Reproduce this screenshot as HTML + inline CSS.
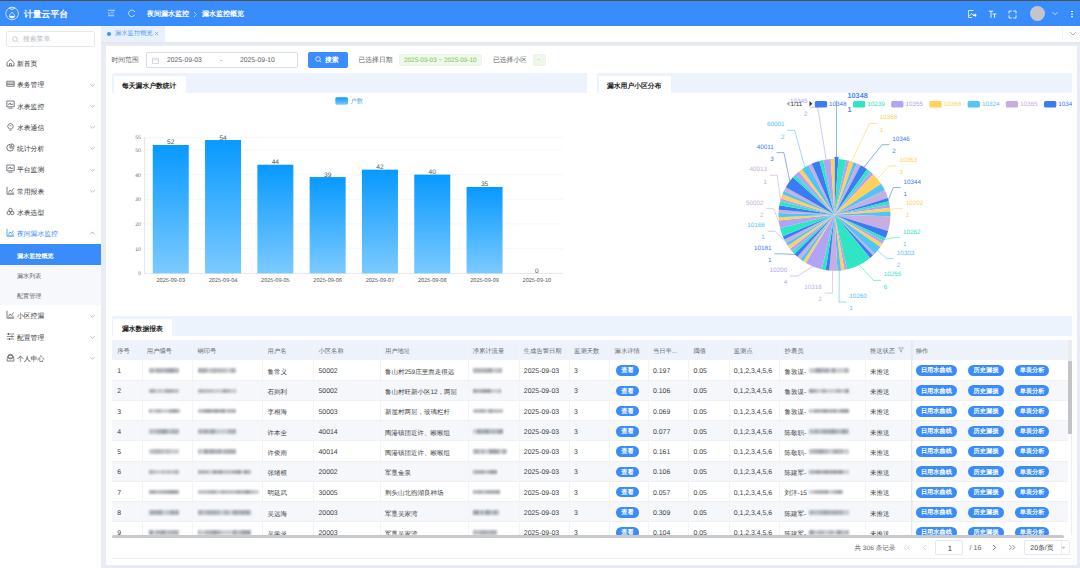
<!DOCTYPE html>
<html><head><meta charset="utf-8">
<style>
*{box-sizing:border-box;margin:0;padding:0}
html,body{width:1080px;height:568px;overflow:hidden;background:#e9edf3;font-family:"Liberation Sans",sans-serif;color:#303133;text-rendering:geometricPrecision}
.a{position:absolute}
.t{position:absolute;white-space:nowrap;line-height:1;transform:translateY(0.9px)}
#topline{left:0;top:0;width:1080px;height:1px;background:#4b5059}
#header{left:0;top:1px;width:1080px;height:25px;background:#388cfc}
#side{left:0;top:26px;width:101px;height:542px;background:#fff}
#tabbar{left:101px;top:26px;width:979px;height:15.6px;background:#fff}
#card{left:106px;top:46px;width:971px;height:519px;background:#fff}
.mi{position:absolute;left:17px;font-size:6.8px;color:#303133;line-height:1;white-space:nowrap;transform:translateY(0.9px)}
.chev{position:absolute;left:90px;width:4px;height:4px;border-right:0.8px solid #909399;border-bottom:0.8px solid #909399;transform:rotate(45deg)}
.hstrip{position:absolute;background:#edf3fd}
.htab{position:absolute;background:#fff}
.htxt{position:absolute;font-size:6.8px;font-weight:bold;color:#1a1a1a;white-space:nowrap;line-height:1;transform:translateY(0.9px)}
</style></head><body>
<div id="topline" class="a"></div>

<div id="header" class="a">
<svg class="a" style="left:4px;top:5px" width="17" height="17" viewBox="0 0 17 17"><circle cx="8.1" cy="7.5" r="6.3" fill="none" stroke="#e6efff" stroke-width="0.8"/><path d="M5 2.1 Q8.1 1.3 11.2 2.1 Q8.1 5 5 2.1Z" fill="none" stroke="#e6efff" stroke-width="0.8"/><path d="M8.1 6 C7.2 7.4 5.4 8.8 5.4 10.2 Q5.4 12 8.1 12 Q10.8 12 10.8 10.2 C10.8 8.8 9 7.4 8.1 6Z" fill="none" stroke="#e6efff" stroke-width="0.75"/><path d="M5.5 10 Q8.1 9.6 10.7 10.4 Q10.5 12 8.1 12 Q5.6 12 5.5 10Z" fill="#fff"/></svg>
<div class="t" style="left:24px;top:7.9px;font-size:8.8px;font-weight:bold;color:#fff">计量云平台</div>
<svg class="a" style="left:107px;top:7.2px" width="9" height="9" viewBox="0 0 9 9"><path d="M1 2.3H8" stroke="#fff" stroke-width="0.8" opacity="0.9"/><path d="M3.8 4.2H7.2" stroke="#fff" stroke-width="0.8" opacity="0.6"/><rect x="1" y="4.6" width="1.6" height="1.1" fill="#fff" opacity="0.7"/><path d="M3.8 5.6H7.2" stroke="#fff" stroke-width="0.6" opacity="0.35"/><rect x="1" y="6.7" width="6.3" height="1.6" fill="#fff" opacity="0.5"/></svg>
<svg class="a" style="left:127px;top:7.4px" width="9" height="9" viewBox="0 0 9 9"><path d="M7.5 3.6A3.2 3.2 0 1 0 7.7 6.7" fill="none" stroke="#fff" stroke-width="0.8" opacity="0.85"/><circle cx="7.5" cy="3.5" r="0.55" fill="#fff" opacity="0.8"/></svg>
<div class="t" style="left:147px;top:9px;font-size:7px;font-weight:bold;color:#fff">夜间漏水监控</div>
<svg class="a" style="left:193px;top:10px" width="5" height="7" viewBox="0 0 5 7"><path d="M1 1L3.5 3.5L1 6" fill="none" stroke="#dfe9fb" stroke-width="0.7"/></svg>
<div class="t" style="left:202px;top:9px;font-size:7px;font-weight:bold;color:#fff">漏水监控概览</div>
<svg class="a" style="left:967px;top:8px" width="10" height="10" viewBox="0 0 10 10"><path d="M6.5 1.5H1.5V8.5H5" fill="none" stroke="#fff" stroke-width="0.8"/><path d="M2.5 7L4.5 4.5L6 6" fill="none" stroke="#fff" stroke-width="0.7"/><path d="M6 5.5H8V4.2L9.6 6.2L8 8.2V6.9H6Z" fill="#fff"/></svg>
<svg class="a" style="left:988px;top:9px" width="9" height="9" viewBox="0 0 9 9"><path d="M0.8 1.2H5.2M3 1.2V7.8M4.6 4H8.4M6.5 4V7.8" fill="none" stroke="#fff" stroke-width="0.9"/></svg>
<svg class="a" style="left:1008px;top:9px" width="9" height="9" viewBox="0 0 9 9"><path d="M1 3.2V1H3.2M5.8 1H8V3.2M8 5.8V8H5.8M3.2 8H1V5.8" fill="none" stroke="#fff" stroke-width="0.9" stroke-linejoin="miter" stroke-linecap="square"/></svg>
<div class="a" style="left:1029.5px;top:4.5px;width:15px;height:15px;border-radius:50%;background:#c3c5cb"></div>
<svg class="a" style="left:1052px;top:10px" width="6" height="5" viewBox="0 0 6 5"><path d="M0.5 1.2L3 3.7L5.5 1.2" fill="none" stroke="#fff" stroke-width="0.7"/></svg>
<div class="a" style="left:1071px;top:9.5px;width:1.5px;height:1.5px;background:#fff;box-shadow:0 2.6px 0 #fff,0 5.2px 0 #fff"></div>
</div>

<div id="side" class="a">
<div class="a" style="left:6px;top:5px;width:89px;height:16px;border:1px solid #e4e7ed;border-radius:2px;background:#fff"></div>
<svg class="a" style="left:12px;top:10px" width="7" height="7" viewBox="0 0 7 7"><circle cx="3" cy="3" r="2.3" fill="none" stroke="#b4b7bd" stroke-width="0.7"/><path d="M4.7 4.7L6.3 6.3" stroke="#b4b7bd" stroke-width="0.7"/></svg>
<div class="t" style="left:23px;top:9.8px;font-size:6.8px;color:#b4b7bd">搜索菜单</div>
<svg class="a" style="left:5.5px;top:31.7px" width="9" height="9" viewBox="0 0 9 9"><path d="M1 4.5L4.5 1.3L8 4.5V8H1Z M3.5 8V5.6H5.5V8" fill="none" stroke="#5a5e66" stroke-width="0.8"/></svg>
<div class="mi" style="top:34.8px">新首页</div>
<svg class="a" style="left:5.5px;top:53.2px" width="9" height="9" viewBox="0 0 9 9"><path d="M0.8 2.2H8.2V7.3H0.8Z M0.8 4H8.2M0.8 5.6H8.2" fill="none" stroke="#5a5e66" stroke-width="0.75"/></svg>
<div class="mi" style="top:56.3px">表务管理</div>
<svg class="a" style="left:89px;top:56.5px" width="7" height="5" viewBox="0 0 7 5"><path d="M1.3 1.1L3.5 3.3L5.7 1.1" fill="none" stroke="#8f939a" stroke-width="0.6"/></svg>
<svg class="a" style="left:5.5px;top:74.4px" width="9" height="9" viewBox="0 0 9 9"><path d="M0.8 1H8.2V6.8H0.8Z M2.5 8.2H6.5 M1.8 4.2H3.4L4.2 3L5 5L5.8 4.2H7.2" fill="none" stroke="#5a5e66" stroke-width="0.8"/></svg>
<div class="mi" style="top:77.5px">水表监控</div>
<svg class="a" style="left:89px;top:77.7px" width="7" height="5" viewBox="0 0 7 5"><path d="M1.3 1.1L3.5 3.3L5.7 1.1" fill="none" stroke="#8f939a" stroke-width="0.6"/></svg>
<svg class="a" style="left:5.5px;top:95.6px" width="9" height="9" viewBox="0 0 9 9"><path d="M2.6 6.2A2.7 2.7 0 1 1 6.4 6.2L5.6 7H3.4Z" fill="none" stroke="#5a5e66" stroke-width="0.8"/><path d="M3.3 4.3A1.3 1.3 0 0 1 5.7 4.3" fill="none" stroke="#5a5e66" stroke-width="0.6"/><path d="M3.6 8.3H5.4" stroke="#5a5e66" stroke-width="0.8"/></svg>
<div class="mi" style="top:98.7px">水表通信</div>
<svg class="a" style="left:89px;top:98.9px" width="7" height="5" viewBox="0 0 7 5"><path d="M1.3 1.1L3.5 3.3L5.7 1.1" fill="none" stroke="#8f939a" stroke-width="0.6"/></svg>
<svg class="a" style="left:5.5px;top:117px" width="9" height="9" viewBox="0 0 9 9"><path d="M4 1.3A3.4 3.4 0 1 0 7.6 5H4Z M5.2 0.8V3.8H8.2A3 3 0 0 0 5.2 0.8Z" fill="none" stroke="#5a5e66" stroke-width="0.8"/></svg>
<div class="mi" style="top:120.1px">统计分析</div>
<svg class="a" style="left:89px;top:120.3px" width="7" height="5" viewBox="0 0 7 5"><path d="M1.3 1.1L3.5 3.3L5.7 1.1" fill="none" stroke="#8f939a" stroke-width="0.6"/></svg>
<svg class="a" style="left:5.5px;top:138.3px" width="9" height="9" viewBox="0 0 9 9"><path d="M0.8 1H8.2V6.8H0.8Z M2.5 8.2H6.5 M1.8 4.2H3.4L4.2 3L5 5L5.8 4.2H7.2" fill="none" stroke="#5a5e66" stroke-width="0.8"/></svg>
<div class="mi" style="top:141.4px">平台监测</div>
<svg class="a" style="left:89px;top:141.6px" width="7" height="5" viewBox="0 0 7 5"><path d="M1.3 1.1L3.5 3.3L5.7 1.1" fill="none" stroke="#8f939a" stroke-width="0.6"/></svg>
<svg class="a" style="left:5.5px;top:159.7px" width="9" height="9" viewBox="0 0 9 9"><path d="M1 0.8V8.2H8.2 M2.5 6.5L4 4L5.5 5.5L7.5 2.5 M3 8V6.8M5 8V6.5M7 8V5.5" fill="none" stroke="#5a5e66" stroke-width="0.8"/></svg>
<div class="mi" style="top:162.8px">常用报表</div>
<svg class="a" style="left:89px;top:163px" width="7" height="5" viewBox="0 0 7 5"><path d="M1.3 1.1L3.5 3.3L5.7 1.1" fill="none" stroke="#8f939a" stroke-width="0.6"/></svg>
<svg class="a" style="left:5.5px;top:180.9px" width="9" height="9" viewBox="0 0 9 9"><circle cx="4.5" cy="3" r="1.7" fill="none" stroke="#5a5e66" stroke-width="0.8"/><circle cx="2.7" cy="6" r="1.7" fill="none" stroke="#5a5e66" stroke-width="0.8"/><circle cx="6.3" cy="6" r="1.7" fill="none" stroke="#5a5e66" stroke-width="0.8"/></svg>
<div class="mi" style="top:184px">水表选型</div>
<svg class="a" style="left:5.5px;top:202px" width="9" height="9" viewBox="0 0 9 9"><path d="M1 0.8V8.2H8.2 M2.5 6.5L4 4L5.5 5.5L7.5 2.5 M3 8V6.8M5 8V6.5M7 8V5.5" fill="none" stroke="#3d8af7" stroke-width="0.8"/></svg>
<div class="mi" style="top:205.1px;color:#3d8af7">夜间漏水监控</div>
<svg class="a" style="left:89px;top:204.9px" width="7" height="5" viewBox="0 0 7 5"><path d="M1.3 3.3L3.5 1.1L5.7 3.3" fill="none" stroke="#3d8af7" stroke-width="0.6"/></svg>
<div class="a" style="left:0;top:218px;width:101px;height:61px;background:#f6f8fb"></div>
<div class="a" style="left:0;top:218px;width:101px;height:20.5px;background:#3a8cfb"></div>
<div class="mi" style="top:226.65px;color:#fff;font-size:6.1px;font-weight:bold">漏水监控概览</div>
<div class="mi" style="top:247.15px;color:#5a5e66;font-size:6.1px">漏水列表</div>
<div class="mi" style="top:267.45px;color:#5a5e66;font-size:6.1px">配置管理</div>
<svg class="a" style="left:5.5px;top:284.2px" width="9" height="9" viewBox="0 0 9 9"><path d="M1 0.8V8.2H8.2 M2.5 6.5L4 4L5.5 5.5L7.5 2.5 M3 8V6.8M5 8V6.5M7 8V5.5" fill="none" stroke="#5a5e66" stroke-width="0.8"/></svg>
<div class="mi" style="top:287.3px">小区控漏</div>
<svg class="a" style="left:89px;top:287.5px" width="7" height="5" viewBox="0 0 7 5"><path d="M1.3 1.1L3.5 3.3L5.7 1.1" fill="none" stroke="#8f939a" stroke-width="0.6"/></svg>
<svg class="a" style="left:5.5px;top:305.7px" width="9" height="9" viewBox="0 0 9 9"><path d="M0.8 2H8.2M0.8 4.5H8.2M0.8 7H8.2" stroke="#5a5e66" stroke-width="0.7"/><path d="M2.5 1V3M6 3.5V5.5M3.5 6V8" stroke="#5a5e66" stroke-width="1"/></svg>
<div class="mi" style="top:308.8px">配置管理</div>
<svg class="a" style="left:89px;top:309px" width="7" height="5" viewBox="0 0 7 5"><path d="M1.3 1.1L3.5 3.3L5.7 1.1" fill="none" stroke="#8f939a" stroke-width="0.6"/></svg>
<svg class="a" style="left:5.5px;top:326.7px" width="9" height="9" viewBox="0 0 9 9"><path d="M1.2 5.5A3.3 3.3 0 0 1 7.8 5.5V8H1.2Z M2.5 5H6.5" fill="none" stroke="#5a5e66" stroke-width="0.8"/><circle cx="4.5" cy="3.6" r="2.4" fill="none" stroke="#5a5e66" stroke-width="0.8"/></svg>
<div class="mi" style="top:329.8px">个人中心</div>
<svg class="a" style="left:89px;top:330px" width="7" height="5" viewBox="0 0 7 5"><path d="M1.3 1.1L3.5 3.3L5.7 1.1" fill="none" stroke="#8f939a" stroke-width="0.6"/></svg>
</div>

<div id="tabbar" class="a">
<div class="a" style="left:0;top:0;width:64px;height:15.6px;background:#e8f1fe"></div>
<div class="a" style="left:5.5px;top:5.5px;width:4px;height:4px;border-radius:50%;background:#3a8cfb"></div>
<div class="t" style="left:14px;top:4.2px;font-size:6.3px;color:#5b9af5">漏水监控概览</div>
<svg class="a" style="left:53px;top:5px" width="5" height="5" viewBox="0 0 5 5"><path d="M1 1L4 4M4 1L1 4" stroke="#5b9af5" stroke-width="0.6"/></svg>
<div class="a" style="left:961px;top:2px;width:1px;height:11px;background:#f0f2f5"></div>
<svg class="a" style="left:968px;top:5px" width="8" height="5" viewBox="0 0 8 5"><path d="M1 1L4 4L7 1" fill="none" stroke="#909399" stroke-width="0.7"/></svg>
</div>


<div class="a" style="left:101px;top:41.6px;width:979px;height:3px;background:linear-gradient(#e2e5ea,#e9edf3)"></div>
<div id="card" class="a">
<div class="t" style="left:5.5px;top:11.1px;font-size:6.8px;color:#606266">时间范围</div>
<div class="a" style="left:39.5px;top:5.5px;width:152.5px;height:16px;border:1px solid #dcdfe6;border-radius:2px;background:#fff"></div>
<svg class="a" style="left:45.5px;top:10.5px" width="7" height="7" viewBox="0 0 7 7"><path d="M0.5 1.2H6.5V6.5H0.5Z M0.5 2.8H6.5" fill="none" stroke="#c0c4cc" stroke-width="0.6"/></svg>
<div class="t" style="left:61px;top:11.1px;font-size:6.8px;color:#606266">2025-09-03</div>
<div class="t" style="left:114px;top:11.1px;font-size:6.8px;color:#606266">-</div>
<div class="t" style="left:134px;top:11.1px;font-size:6.8px;color:#606266">2025-09-10</div>
<div class="a" style="left:202px;top:5.5px;width:40px;height:16px;border-radius:2px;background:#3a8cfb"></div>
<svg class="a" style="left:209px;top:10px" width="7" height="7" viewBox="0 0 7 7"><circle cx="3" cy="3" r="2.3" fill="none" stroke="#fff" stroke-width="0.7"/><path d="M4.7 4.7L6.3 6.3" stroke="#fff" stroke-width="0.7"/></svg>
<div class="t" style="left:219px;top:11.1px;font-size:6.8px;color:#fff;font-weight:bold">搜索</div>
<div class="t" style="left:252.5px;top:11.1px;font-size:6.8px;color:#606266">已选择日期</div>
<div class="a" style="left:293px;top:7.5px;width:83px;height:12px;border:0.5px solid #ecf6e6;border-radius:2px;background:#eff8ea"></div>
<div class="t" style="left:298px;top:11.2px;font-size:6.4px;color:#7cc35a">2025-09-03 ~ 2025-09-10</div>
<div class="t" style="left:387px;top:11.1px;font-size:6.8px;color:#606266">已选择小区</div>
<div class="a" style="left:427px;top:7.5px;width:13px;height:12px;border:0.5px solid #ecf6e6;border-radius:2px;background:#eff8ea"></div>
<div class="t" style="left:431.5px;top:10.2px;font-size:6.4px;color:#7cc35a">-</div>
</div>

<div id="charts">
<div class="hstrip" style="left:111.5px;top:72.7px;width:475.5px;height:20px"></div>
<div class="htab" style="left:113.5px;top:75.8px;width:72px;height:17px"></div>
<div class="htxt" style="left:122px;top:82.5px">每天漏水户数统计</div>
<div class="hstrip" style="left:597px;top:72.7px;width:475px;height:20px"></div>
<div class="htab" style="left:599px;top:75.8px;width:72px;height:17px"></div>
<div class="htxt" style="left:607px;top:82.5px">漏水用户小区分布</div>
<div class="hstrip" style="left:111.5px;top:316px;width:960.5px;height:20px"></div>
<div class="htab" style="left:113px;top:319.4px;width:59px;height:17px"></div>
<div class="htxt" style="left:122px;top:325.7px">漏水数据报表</div>
<svg class="a" style="left:0;top:0" width="1080" height="568" viewBox="0 0 1080 568">
<defs><linearGradient id="bg" x1="0" y1="0" x2="0" y2="1"><stop offset="0" stop-color="#0799ff"/><stop offset="1" stop-color="#7ccaff"/></linearGradient></defs>
<line x1="144.6" y1="248.7" x2="563" y2="248.7" stroke="#eef0f4" stroke-width="0.6"/>
<line x1="144.6" y1="224" x2="563" y2="224" stroke="#eef0f4" stroke-width="0.6"/>
<line x1="144.6" y1="199.3" x2="563" y2="199.3" stroke="#eef0f4" stroke-width="0.6"/>
<line x1="144.6" y1="174.6" x2="563" y2="174.6" stroke="#eef0f4" stroke-width="0.6"/>
<line x1="144.6" y1="149.9" x2="563" y2="149.9" stroke="#eef0f4" stroke-width="0.6"/>
<line x1="144.6" y1="137.55" x2="563" y2="137.55" stroke="#eef0f4" stroke-width="0.6"/>
<line x1="144.6" y1="137.55" x2="144.6" y2="273.4" stroke="#e3e3e3" stroke-width="0.9"/>
<line x1="144.6" y1="273.4" x2="563" y2="273.4" stroke="#e3e3e3" stroke-width="0.9"/>
<text x="141" y="275.3" font-size="5.2" fill="#6e7079" text-anchor="end" font-family="Liberation Sans">0</text>
<text x="141" y="250.6" font-size="5.2" fill="#6e7079" text-anchor="end" font-family="Liberation Sans">10</text>
<text x="141" y="225.9" font-size="5.2" fill="#6e7079" text-anchor="end" font-family="Liberation Sans">20</text>
<text x="141" y="201.2" font-size="5.2" fill="#6e7079" text-anchor="end" font-family="Liberation Sans">30</text>
<text x="141" y="176.5" font-size="5.2" fill="#6e7079" text-anchor="end" font-family="Liberation Sans">40</text>
<text x="141" y="151.8" font-size="5.2" fill="#6e7079" text-anchor="end" font-family="Liberation Sans">50</text>
<text x="141" y="139.45" font-size="5.2" fill="#6e7079" text-anchor="end" font-family="Liberation Sans">55</text>
<rect x="152.75" y="144.96" width="36" height="128.44" fill="url(#bg)"/>
<text x="170.75" y="144.46" font-size="6.6" fill="#555" text-anchor="middle" font-family="Liberation Sans">52</text>
<text x="170.75" y="281.7" font-size="5.6" fill="#555" text-anchor="middle" font-family="Liberation Sans">2025-09-03</text>
<rect x="205.05" y="140.02" width="36" height="133.38" fill="url(#bg)"/>
<text x="223.05" y="139.52" font-size="6.6" fill="#555" text-anchor="middle" font-family="Liberation Sans">54</text>
<text x="223.05" y="281.7" font-size="5.6" fill="#555" text-anchor="middle" font-family="Liberation Sans">2025-09-04</text>
<rect x="257.35" y="164.72" width="36" height="108.68" fill="url(#bg)"/>
<text x="275.35" y="164.22" font-size="6.6" fill="#555" text-anchor="middle" font-family="Liberation Sans">44</text>
<text x="275.35" y="281.7" font-size="5.6" fill="#555" text-anchor="middle" font-family="Liberation Sans">2025-09-05</text>
<rect x="309.65" y="177.07" width="36" height="96.33" fill="url(#bg)"/>
<text x="327.65" y="176.57" font-size="6.6" fill="#555" text-anchor="middle" font-family="Liberation Sans">39</text>
<text x="327.65" y="281.7" font-size="5.6" fill="#555" text-anchor="middle" font-family="Liberation Sans">2025-09-06</text>
<rect x="361.95" y="169.66" width="36" height="103.74" fill="url(#bg)"/>
<text x="379.95" y="169.16" font-size="6.6" fill="#555" text-anchor="middle" font-family="Liberation Sans">42</text>
<text x="379.95" y="281.7" font-size="5.6" fill="#555" text-anchor="middle" font-family="Liberation Sans">2025-09-07</text>
<rect x="414.25" y="174.6" width="36" height="98.8" fill="url(#bg)"/>
<text x="432.25" y="174.1" font-size="6.6" fill="#555" text-anchor="middle" font-family="Liberation Sans">40</text>
<text x="432.25" y="281.7" font-size="5.6" fill="#555" text-anchor="middle" font-family="Liberation Sans">2025-09-08</text>
<rect x="466.55" y="186.95" width="36" height="86.45" fill="url(#bg)"/>
<text x="484.55" y="186.45" font-size="6.6" fill="#555" text-anchor="middle" font-family="Liberation Sans">35</text>
<text x="484.55" y="281.7" font-size="5.6" fill="#555" text-anchor="middle" font-family="Liberation Sans">2025-09-09</text>
<text x="536.85" y="272.9" font-size="6.6" fill="#555" text-anchor="middle" font-family="Liberation Sans">0</text>
<text x="536.85" y="281.7" font-size="5.6" fill="#555" text-anchor="middle" font-family="Liberation Sans">2025-09-10</text>
<rect x="335.3" y="97.2" width="12.7" height="7.5" rx="1.6" fill="url(#bg)"/>
<text x="350.5" y="102.6" font-size="6.2" fill="#4aa8f8" font-family="Liberation Sans">户数</text>
</svg>
<!--PIE--><svg class="a" style="left:0;top:0" width="1080" height="568" viewBox="0 0 1080 568" font-family="Liberation Sans"><defs><clipPath id="pieclip"><rect x="597" y="92.8" width="475" height="220"/></clipPath><clipPath id="legclip"><rect x="780" y="95" width="292" height="15"/></clipPath></defs><g clip-path="url(#pieclip)"><path d="M834.50 214.80L834.50 156.80A58 58 0 0 1 838.55 156.94Z" fill="#3b7cf5"/><path d="M834.50 214.80L838.41 158.94A56 56 0 0 1 846.05 160.00Z" fill="#2fe5c3"/><path d="M834.50 214.80L846.05 160.00A56 56 0 0 1 849.37 160.81Z" fill="#b1a3f5"/><path d="M834.50 214.80L849.37 160.81A56 56 0 0 1 853.65 162.18Z" fill="#fdd15b"/><path d="M834.50 214.80L853.65 162.18A56 56 0 0 1 857.01 163.52Z" fill="#56c3f6"/><path d="M834.50 214.80L857.01 163.52A56 56 0 0 1 860.70 165.31Z" fill="#c6aee1"/><path d="M834.50 214.80L860.70 165.31A56 56 0 0 1 867.02 169.21Z" fill="#3b7cf5"/><path d="M834.50 214.80L867.02 169.21A56 56 0 0 1 870.42 171.84Z" fill="#2fe5c3"/><path d="M834.50 214.80L870.42 171.84A56 56 0 0 1 873.26 174.38Z" fill="#b1a3f5"/><path d="M834.50 214.80L873.26 174.38A56 56 0 0 1 881.14 183.81Z" fill="#fdd15b"/><path d="M834.50 214.80L881.14 183.81A56 56 0 0 1 884.83 190.25Z" fill="#56c3f6"/><path d="M834.50 214.80L884.83 190.25A56 56 0 0 1 887.91 197.96Z" fill="#c6aee1"/><path d="M834.50 214.80L887.91 197.96A56 56 0 0 1 888.84 201.25Z" fill="#3b7cf5"/><path d="M834.50 214.80L888.84 201.25A56 56 0 0 1 889.54 204.50Z" fill="#2fe5c3"/><path d="M834.50 214.80L889.54 204.50A56 56 0 0 1 890.05 207.68Z" fill="#b1a3f5"/><path d="M834.50 214.80L890.05 207.68A56 56 0 0 1 890.40 211.38Z" fill="#fdd15b"/><path d="M834.50 214.80L890.40 211.38A56 56 0 0 1 890.48 216.27Z" fill="#56c3f6"/><path d="M834.50 214.80L890.48 216.27A56 56 0 0 1 888.14 230.89Z" fill="#c6aee1"/><path d="M834.50 214.80L888.14 230.89A56 56 0 0 1 885.50 237.93Z" fill="#3b7cf5"/><path d="M834.50 214.80L885.50 237.93A56 56 0 0 1 883.95 241.09Z" fill="#2fe5c3"/><path d="M834.50 214.80L883.95 241.09A56 56 0 0 1 882.40 243.81Z" fill="#b1a3f5"/><path d="M834.50 214.80L882.40 243.81A56 56 0 0 1 880.32 247.00Z" fill="#fdd15b"/><path d="M834.50 214.80L880.32 247.00A56 56 0 0 1 874.78 253.70Z" fill="#56c3f6"/><path d="M834.50 214.80L874.78 253.70A56 56 0 0 1 872.98 255.49Z" fill="#c6aee1"/><path d="M834.50 214.80L872.98 255.49A56 56 0 0 1 870.12 258.01Z" fill="#3b7cf5"/><path d="M834.50 214.80L870.12 258.01A56 56 0 0 1 847.19 269.34Z" fill="#2fe5c3"/><path d="M834.50 214.80L847.19 269.34A56 56 0 0 1 844.42 269.91Z" fill="#b1a3f5"/><path d="M834.50 214.80L844.42 269.91A56 56 0 0 1 841.13 270.41Z" fill="#fdd15b"/><path d="M834.50 214.80L841.13 270.41A56 56 0 0 1 837.43 270.72Z" fill="#56c3f6"/><path d="M834.50 214.80L837.43 270.72A56 56 0 0 1 829.23 270.55Z" fill="#c6aee1"/><path d="M834.50 214.80L829.23 270.55A56 56 0 0 1 825.55 270.08Z" fill="#3b7cf5"/><path d="M834.50 214.80L825.55 270.08A56 56 0 0 1 821.71 269.32Z" fill="#2fe5c3"/><path d="M834.50 214.80L821.71 269.32A56 56 0 0 1 805.83 262.90Z" fill="#b1a3f5"/><path d="M834.50 214.80L805.83 262.90A56 56 0 0 1 803.19 261.23Z" fill="#fdd15b"/><path d="M834.50 214.80L803.19 261.23A56 56 0 0 1 800.41 259.23Z" fill="#56c3f6"/><path d="M834.50 214.80L800.41 259.23A56 56 0 0 1 797.47 256.81Z" fill="#c6aee1"/><path d="M834.50 214.80L797.47 256.81A56 56 0 0 1 794.49 253.98Z" fill="#3b7cf5"/><path d="M834.50 214.80L794.49 253.98A56 56 0 0 1 792.24 251.54Z" fill="#2fe5c3"/><path d="M834.50 214.80L792.24 251.54A56 56 0 0 1 790.01 248.81Z" fill="#b1a3f5"/><path d="M834.50 214.80L790.01 248.81A56 56 0 0 1 787.75 245.63Z" fill="#fdd15b"/><path d="M834.50 214.80L787.75 245.63A56 56 0 0 1 786.10 242.97Z" fill="#56c3f6"/><path d="M834.50 214.80L786.10 242.97A56 56 0 0 1 784.30 239.61Z" fill="#c6aee1"/><path d="M834.50 214.80L784.30 239.61A56 56 0 0 1 782.80 236.32Z" fill="#3b7cf5"/><path d="M834.50 214.80L782.80 236.32A56 56 0 0 1 780.07 227.97Z" fill="#2fe5c3"/><path d="M834.50 214.80L780.07 227.97A56 56 0 0 1 778.79 220.46Z" fill="#b1a3f5"/><path d="M834.50 214.80L778.79 220.46A56 56 0 0 1 778.55 217.24Z" fill="#fdd15b"/><path d="M834.50 214.80L778.55 217.24A56 56 0 0 1 778.53 212.94Z" fill="#56c3f6"/><path d="M834.50 214.80L778.53 212.94A56 56 0 0 1 778.73 209.72Z" fill="#c6aee1"/><path d="M834.50 214.80L778.73 209.72A56 56 0 0 1 779.32 205.27Z" fill="#3b7cf5"/><path d="M834.50 214.80L779.32 205.27A56 56 0 0 1 780.16 201.25Z" fill="#2fe5c3"/><path d="M834.50 214.80L780.16 201.25A56 56 0 0 1 780.92 198.52Z" fill="#b1a3f5"/><path d="M834.50 214.80L780.92 198.52A56 56 0 0 1 782.36 194.37Z" fill="#fdd15b"/><path d="M834.50 214.80L782.36 194.37A56 56 0 0 1 783.96 190.69Z" fill="#56c3f6"/><path d="M834.50 214.80L783.96 190.69A56 56 0 0 1 785.76 187.22Z" fill="#c6aee1"/><path d="M834.50 214.80L785.76 187.22A56 56 0 0 1 792.88 177.33Z" fill="#3b7cf5"/><path d="M834.50 214.80L792.88 177.33A56 56 0 0 1 795.25 174.86Z" fill="#2fe5c3"/><path d="M834.50 214.80L795.25 174.86A56 56 0 0 1 798.96 171.53Z" fill="#b1a3f5"/><path d="M834.50 214.80L798.96 171.53A56 56 0 0 1 802.06 169.15Z" fill="#fdd15b"/><path d="M834.50 214.80L802.06 169.15A56 56 0 0 1 808.47 165.22Z" fill="#56c3f6"/><path d="M834.50 214.80L808.47 165.22A56 56 0 0 1 811.72 163.64Z" fill="#c6aee1"/><path d="M834.50 214.80L811.72 163.64A56 56 0 0 1 819.35 160.89Z" fill="#3b7cf5"/><path d="M834.50 214.80L819.35 160.89A56 56 0 0 1 823.14 159.96Z" fill="#2fe5c3"/><path d="M834.50 214.80L823.14 159.96A56 56 0 0 1 830.69 158.93Z" fill="#b1a3f5"/><path d="M834.50 214.80L830.69 158.93A56 56 0 0 1 834.50 158.80Z" fill="#fdd15b"/><polyline points="851.53,161.45 869.50,123.50 876.90,123.50" fill="none" stroke="#fdd15b" stroke-width="0.6"/><text x="879.70" y="119.40" font-size="6.3" fill="#fdd15b" text-anchor="start">10368</text><text x="879.70" y="131.70" font-size="6.3" fill="#fdd15b" text-anchor="start">1</text><polyline points="863.93,167.15 882.10,144.70 889.50,144.70" fill="none" stroke="#3b7cf5" stroke-width="0.6"/><text x="892.30" y="140.60" font-size="6.3" fill="#3b7cf5" text-anchor="start">10346</text><text x="892.30" y="152.90" font-size="6.3" fill="#3b7cf5" text-anchor="start">2</text><polyline points="877.46,178.88 889.20,166.00 896.60,166.00" fill="none" stroke="#fdd15b" stroke-width="0.6"/><text x="899.40" y="161.90" font-size="6.3" fill="#fdd15b" text-anchor="start">10363</text><text x="899.40" y="174.20" font-size="6.3" fill="#fdd15b" text-anchor="start">3</text><polyline points="888.40,199.60 893.30,187.60 900.70,187.60" fill="none" stroke="#3b7cf5" stroke-width="0.6"/><text x="903.50" y="183.50" font-size="6.3" fill="#3b7cf5" text-anchor="start">10344</text><text x="903.50" y="195.80" font-size="6.3" fill="#3b7cf5" text-anchor="start">1</text><polyline points="890.25,209.53 895.50,208.70 902.90,208.70" fill="none" stroke="#fdd15b" stroke-width="0.6"/><text x="905.70" y="204.60" font-size="6.3" fill="#fdd15b" text-anchor="start">10202</text><text x="905.70" y="216.90" font-size="6.3" fill="#fdd15b" text-anchor="start">1</text><polyline points="884.75,239.52 892.80,237.70 900.20,237.70" fill="none" stroke="#2fe5c3" stroke-width="0.6"/><text x="903.00" y="233.60" font-size="6.3" fill="#2fe5c3" text-anchor="start">10262</text><text x="903.00" y="245.90" font-size="6.3" fill="#2fe5c3" text-anchor="start">1</text><polyline points="877.68,250.46 886.50,258.60 893.90,258.60" fill="none" stroke="#56c3f6" stroke-width="0.6"/><text x="896.70" y="254.50" font-size="6.3" fill="#56c3f6" text-anchor="start">10303</text><text x="896.70" y="266.80" font-size="6.3" fill="#56c3f6" text-anchor="start">2</text><polyline points="859.31,265.00 873.50,280.40 880.90,280.40" fill="none" stroke="#2fe5c3" stroke-width="0.6"/><text x="883.70" y="276.30" font-size="6.3" fill="#2fe5c3" text-anchor="start">10255</text><text x="883.70" y="288.60" font-size="6.3" fill="#2fe5c3" text-anchor="start">6</text><polyline points="839.28,270.60 839.00,302.00 846.40,302.00" fill="none" stroke="#56c3f6" stroke-width="0.6"/><text x="849.20" y="297.90" font-size="6.3" fill="#56c3f6" text-anchor="start">10260</text><text x="849.20" y="310.20" font-size="6.3" fill="#56c3f6" text-anchor="start">1</text><polyline points="832.55,270.77 832.55,293.20 824.60,293.20" fill="none" stroke="#c6aee1" stroke-width="0.6"/><text x="821.80" y="289.10" font-size="6.3" fill="#c6aee1" text-anchor="end">10316</text><text x="821.80" y="301.40" font-size="6.3" fill="#c6aee1" text-anchor="end">2</text><polyline points="812.89,266.46 797.40,276.00 790.00,276.00" fill="none" stroke="#b1a3f5" stroke-width="0.6"/><text x="787.20" y="271.90" font-size="6.3" fill="#b1a3f5" text-anchor="end">10200</text><text x="787.20" y="284.20" font-size="6.3" fill="#b1a3f5" text-anchor="end">4</text><polyline points="795.04,254.54 781.70,253.80 774.30,253.80" fill="none" stroke="#3b7cf5" stroke-width="0.6"/><text x="771.50" y="249.70" font-size="6.3" fill="#3b7cf5" text-anchor="end">10181</text><text x="771.50" y="262.00" font-size="6.3" fill="#3b7cf5" text-anchor="end">1</text><polyline points="785.38,241.69 774.90,231.20 767.50,231.20" fill="none" stroke="#56c3f6" stroke-width="0.6"/><text x="764.70" y="227.10" font-size="6.3" fill="#56c3f6" text-anchor="end">10166</text><text x="764.70" y="239.40" font-size="6.3" fill="#56c3f6" text-anchor="end">1</text><polyline points="779.04,222.59 773.60,208.60 766.20,208.60" fill="none" stroke="#c6aee1" stroke-width="0.6"/><text x="763.40" y="204.50" font-size="6.3" fill="#c6aee1" text-anchor="end">50002</text><text x="763.40" y="216.80" font-size="6.3" fill="#c6aee1" text-anchor="end">2</text><polyline points="780.54,199.83 777.20,175.30 769.80,175.30" fill="none" stroke="#c6aee1" stroke-width="0.6"/><text x="767.00" y="171.20" font-size="6.3" fill="#c6aee1" text-anchor="end">40013</text><text x="767.00" y="183.50" font-size="6.3" fill="#c6aee1" text-anchor="end">1</text><polyline points="789.78,181.10 783.90,152.60 776.50,152.60" fill="none" stroke="#3b7cf5" stroke-width="0.6"/><text x="773.70" y="148.50" font-size="6.3" fill="#3b7cf5" text-anchor="end">40011</text><text x="773.70" y="160.80" font-size="6.3" fill="#3b7cf5" text-anchor="end">3</text><polyline points="804.82,167.31 794.70,130.30 787.30,130.30" fill="none" stroke="#56c3f6" stroke-width="0.6"/><text x="784.50" y="126.20" font-size="6.3" fill="#56c3f6" text-anchor="end">60001</text><text x="784.50" y="138.50" font-size="6.3" fill="#56c3f6" text-anchor="end">2</text><polyline points="826.13,159.43 817.70,107.30 810.30,107.30" fill="none" stroke="#b1a3f5" stroke-width="0.6"/><text x="807.50" y="103.20" font-size="6.3" fill="#b1a3f5" text-anchor="end">10345</text><text x="807.50" y="115.50" font-size="6.3" fill="#b1a3f5" text-anchor="end">2</text><polyline points="836.5,157 836.5,100.6" fill="none" stroke="#7aa6f7" stroke-width="0.8"/><text x="847.5" y="97.6" font-size="7.3" font-weight="bold" fill="#4a86f5">10348</text><text x="847.5" y="111.8" font-size="7.3" font-weight="bold" fill="#4a86f5">1</text></g><g clip-path="url(#legclip)"><path d="M786.7 103.7L789.5 101V106.4Z" fill="#aaa"/><text x="790.5" y="106" font-size="6.2" fill="#333">1/11</text><path d="M812.3 103.7L809.5 101V106.4Z" fill="#333"/><rect x="814.80" y="100.9" width="12.3" height="6.6" rx="1.5" fill="#3b7cf5"/><text x="829.10" y="105.9" font-size="6.3" fill="#3b7cf5">10348</text><rect x="853.00" y="100.9" width="12.3" height="6.6" rx="1.5" fill="#2fe5c3"/><text x="867.30" y="105.9" font-size="6.3" fill="#2fe5c3">10239</text><rect x="891.20" y="100.9" width="12.3" height="6.6" rx="1.5" fill="#b1a3f5"/><text x="905.50" y="105.9" font-size="6.3" fill="#b1a3f5">10355</text><rect x="929.40" y="100.9" width="12.3" height="6.6" rx="1.5" fill="#fdd15b"/><text x="943.70" y="105.9" font-size="6.3" fill="#fdd15b">10368</text><rect x="967.60" y="100.9" width="12.3" height="6.6" rx="1.5" fill="#56c3f6"/><text x="981.90" y="105.9" font-size="6.3" fill="#56c3f6">10324</text><rect x="1005.80" y="100.9" width="12.3" height="6.6" rx="1.5" fill="#c6aee1"/><text x="1020.10" y="105.9" font-size="6.3" fill="#c6aee1">10365</text><rect x="1044.00" y="100.9" width="12.3" height="6.6" rx="1.5" fill="#3b7cf5"/><text x="1058.30" y="105.9" font-size="6.3" fill="#3b7cf5">10346</text></g></svg><!--/PIE-->
<!--TABLE--><div class="a" style="left:112px;top:340.2px;width:960px;height:194.4px;overflow:hidden">
<div class="a" style="left:0;top:0;width:956.2px;height:20.3px;background:#eef3fb"></div>
<div class="a" style="left:0;top:20.30px;width:956.2px;height:20.25px;background:#fff;border-bottom:0.6px solid #eff1f5"></div>
<div class="a" style="left:0;top:40.55px;width:956.2px;height:20.25px;background:#f5f7fa;border-bottom:0.6px solid #eff1f5"></div>
<div class="a" style="left:0;top:60.80px;width:956.2px;height:20.25px;background:#fff;border-bottom:0.6px solid #eff1f5"></div>
<div class="a" style="left:0;top:81.05px;width:956.2px;height:20.25px;background:#f5f7fa;border-bottom:0.6px solid #eff1f5"></div>
<div class="a" style="left:0;top:101.30px;width:956.2px;height:20.25px;background:#fff;border-bottom:0.6px solid #eff1f5"></div>
<div class="a" style="left:0;top:121.55px;width:956.2px;height:20.25px;background:#f5f7fa;border-bottom:0.6px solid #eff1f5"></div>
<div class="a" style="left:0;top:141.80px;width:956.2px;height:20.25px;background:#fff;border-bottom:0.6px solid #eff1f5"></div>
<div class="a" style="left:0;top:162.05px;width:956.2px;height:20.25px;background:#f5f7fa;border-bottom:0.6px solid #eff1f5"></div>
<div class="a" style="left:0;top:182.30px;width:956.2px;height:20.25px;background:#fff;border-bottom:0.6px solid #eff1f5"></div>
<div class="a" style="left:29.50px;top:0;width:0.6px;height:195px;background:#f3f4f7"></div>
<div class="a" style="left:80.30px;top:0;width:0.6px;height:195px;background:#f3f4f7"></div>
<div class="a" style="left:150.40px;top:0;width:0.6px;height:195px;background:#f3f4f7"></div>
<div class="a" style="left:201.30px;top:0;width:0.6px;height:195px;background:#f3f4f7"></div>
<div class="a" style="left:267.70px;top:0;width:0.6px;height:195px;background:#f3f4f7"></div>
<div class="a" style="left:355.50px;top:0;width:0.6px;height:195px;background:#f3f4f7"></div>
<div class="a" style="left:406.60px;top:0;width:0.6px;height:195px;background:#f3f4f7"></div>
<div class="a" style="left:456.90px;top:0;width:0.6px;height:195px;background:#f3f4f7"></div>
<div class="a" style="left:497.40px;top:0;width:0.6px;height:195px;background:#f3f4f7"></div>
<div class="a" style="left:535.80px;top:0;width:0.6px;height:195px;background:#f3f4f7"></div>
<div class="a" style="left:576.30px;top:0;width:0.6px;height:195px;background:#f3f4f7"></div>
<div class="a" style="left:616.60px;top:0;width:0.6px;height:195px;background:#f3f4f7"></div>
<div class="a" style="left:667.40px;top:0;width:0.6px;height:195px;background:#f3f4f7"></div>
<div class="a" style="left:752.70px;top:0;width:0.6px;height:195px;background:#f3f4f7"></div>
<div class="a" style="left:798.60px;top:0;width:0.6px;height:195px;background:#f3f4f7"></div>
<div class="a" style="left:798.60px;top:0;width:3px;height:195px;background:linear-gradient(90deg,rgba(0,0,0,0.06),rgba(0,0,0,0))"></div>
<div class="t" style="left:5.20px;top:8.15px;font-size:6.3px;color:#686c74">序号</div>
<div class="t" style="left:34.70px;top:8.15px;font-size:6.3px;color:#686c74">用户编号</div>
<div class="t" style="left:85.50px;top:8.15px;font-size:6.3px;color:#686c74">钢印号</div>
<div class="t" style="left:155.60px;top:8.15px;font-size:6.3px;color:#686c74">用户名</div>
<div class="t" style="left:206.50px;top:8.15px;font-size:6.3px;color:#686c74">小区名称</div>
<div class="t" style="left:272.90px;top:8.15px;font-size:6.3px;color:#686c74">用户地址</div>
<div class="t" style="left:360.70px;top:8.15px;font-size:6.3px;color:#686c74">净累计流量</div>
<div class="t" style="left:411.80px;top:8.15px;font-size:6.3px;color:#686c74">生成告警日期</div>
<div class="t" style="left:462.10px;top:8.15px;font-size:6.3px;color:#686c74">监测天数</div>
<div class="t" style="left:502.60px;top:8.15px;font-size:6.3px;color:#686c74">漏水详情</div>
<div class="t" style="left:541.00px;top:8.15px;font-size:6.3px;color:#686c74">当日平...</div>
<div class="t" style="left:581.50px;top:8.15px;font-size:6.3px;color:#686c74">阈值</div>
<div class="t" style="left:621.80px;top:8.15px;font-size:6.3px;color:#686c74">监测点</div>
<div class="t" style="left:672.60px;top:8.15px;font-size:6.3px;color:#686c74">抄表员</div>
<div class="t" style="left:757.90px;top:8.15px;font-size:6.3px;color:#686c74">推送状态</div>
<div class="t" style="left:803.80px;top:8.15px;font-size:6.3px;color:#686c74">操作</div>
<svg class="a" style="left:786.00px;top:6.5px" width="6" height="6" viewBox="0 0 6 6"><path d="M0.6 0.8H5.4L3.5 3V5.2L2.5 4.6V3Z" fill="none" stroke="#8d9199" stroke-width="0.6"/></svg>
<div class="t" style="left:5.20px;top:28.03px;font-size:6.9px;color:#3c3f45">1</div>
<div class="a" style="left:36.50px;top:28.23px;width:30px;height:4.4px;background:linear-gradient(90deg,#a7abb2 0px 5px,#c3c6cb 5px 7px,#9ea2a9 7px 12px,#a7abb2 12px 17px,#9ea2a9 17px 19px,#8f949c 19px 22px,#8f949c 22px 25px,#a7abb2 25px 28px,#a7abb2 28px 30px);filter:blur(0.8px);opacity:0.85"></div>
<div class="a" style="left:85.80px;top:28.23px;width:38px;height:4.4px;background:linear-gradient(90deg,#9ea2a9 0px 2px,#9ea2a9 2px 4px,#9ea2a9 4px 9px,#c3c6cb 9px 12px,#b3b6bc 12px 15px,#a7abb2 15px 19px,#b3b6bc 19px 21px,#a7abb2 21px 23px,#b3b6bc 23px 28px,#c3c6cb 28px 33px,#9ea2a9 33px 36px,#b3b6bc 36px 38px);filter:blur(0.8px);opacity:0.85"></div>
<div class="t" style="left:155.60px;top:28.62px;font-size:6.5px;color:#3c3f45">鲁常义</div>
<div class="t" style="left:206.50px;top:28.03px;font-size:6.9px;color:#3c3f45">50002</div>
<div class="t" style="left:272.90px;top:28.62px;font-size:6.5px;color:#3c3f45">鲁山村259庄里面走很远</div>
<div class="a" style="left:360.50px;top:28.23px;width:29px;height:4.4px;background:linear-gradient(90deg,#a7abb2 0px 4px,#a7abb2 4px 8px,#a7abb2 8px 13px,#9ea2a9 13px 17px,#8f949c 17px 19px,#c3c6cb 19px 23px,#b3b6bc 23px 27px,#9ea2a9 27px 29px);filter:blur(0.8px);opacity:0.85"></div>
<div class="t" style="left:411.80px;top:28.03px;font-size:6.9px;color:#3c3f45">2025-09-03</div>
<div class="t" style="left:462.10px;top:28.03px;font-size:6.9px;color:#3c3f45">3</div>
<div class="a" style="left:504.40px;top:25.18px;width:22.2px;height:10.5px;border-radius:5.3px;background:#3a8cfb"></div>
<div class="t" style="left:509.30px;top:27.23px;font-size:6.2px;font-weight:bold;color:#fff">查看</div>
<div class="t" style="left:541.00px;top:28.03px;font-size:6.9px;color:#3c3f45">0.197</div>
<div class="t" style="left:581.50px;top:28.03px;font-size:6.9px;color:#3c3f45">0.05</div>
<div class="t" style="left:621.80px;top:28.03px;font-size:6.9px;color:#3c3f45">0,1,2,3,4,5,6</div>
<div class="t" style="left:672.60px;top:28.62px;font-size:6.5px;color:#3c3f45">鲁敦谋-</div>
<div class="a" style="left:696.50px;top:28.23px;width:40px;height:4.4px;background:linear-gradient(90deg,#c3c6cb 0px 2px,#c3c6cb 2px 4px,#b3b6bc 4px 7px,#8f949c 7px 12px,#a7abb2 12px 16px,#9ea2a9 16px 20px,#c3c6cb 20px 23px,#8f949c 23px 26px,#c3c6cb 26px 31px,#c3c6cb 31px 36px,#9ea2a9 36px 38px,#b3b6bc 38px 40px);filter:blur(0.8px);opacity:0.85"></div>
<div class="t" style="left:757.90px;top:28.62px;font-size:6.5px;color:#3c3f45">未推送</div>
<div class="a" style="left:803.60px;top:24.93px;width:41.6px;height:11px;border-radius:5.5px;background:#3a8cfb"></div>
<div class="t" style="left:803.60px;top:27.23px;font-size:6.2px;font-weight:bold;color:#fff;width:41.6px;text-align:center">日用水曲线</div>
<div class="a" style="left:856.30px;top:24.93px;width:35.3px;height:11px;border-radius:5.5px;background:#3a8cfb"></div>
<div class="t" style="left:856.30px;top:27.23px;font-size:6.2px;font-weight:bold;color:#fff;width:35.3px;text-align:center">历史漏损</div>
<div class="a" style="left:902.70px;top:24.93px;width:34.7px;height:11px;border-radius:5.5px;background:#3a8cfb"></div>
<div class="t" style="left:902.70px;top:27.23px;font-size:6.2px;font-weight:bold;color:#fff;width:34.7px;text-align:center">单表分析</div>
<div class="t" style="left:5.20px;top:48.27px;font-size:6.9px;color:#3c3f45">2</div>
<div class="a" style="left:36.50px;top:48.47px;width:30px;height:4.4px;background:linear-gradient(90deg,#a7abb2 0px 2px,#9ea2a9 2px 6px,#c3c6cb 6px 10px,#b3b6bc 10px 12px,#c3c6cb 12px 16px,#9ea2a9 16px 19px,#9ea2a9 19px 24px,#b3b6bc 24px 26px,#b3b6bc 26px 29px,#c3c6cb 29px 30px);filter:blur(0.8px);opacity:0.85"></div>
<div class="a" style="left:85.80px;top:48.47px;width:38px;height:4.4px;background:linear-gradient(90deg,#a7abb2 0px 5px,#b3b6bc 5px 10px,#b3b6bc 10px 15px,#c3c6cb 15px 17px,#c3c6cb 17px 22px,#c3c6cb 22px 25px,#8f949c 25px 27px,#a7abb2 27px 32px,#c3c6cb 32px 37px,#9ea2a9 37px 38px);filter:blur(0.8px);opacity:0.85"></div>
<div class="t" style="left:155.60px;top:48.88px;font-size:6.5px;color:#3c3f45">石则利</div>
<div class="t" style="left:206.50px;top:48.27px;font-size:6.9px;color:#3c3f45">50002</div>
<div class="t" style="left:272.90px;top:48.88px;font-size:6.5px;color:#3c3f45">鲁山村旺新小区12，两层</div>
<div class="a" style="left:360.50px;top:48.47px;width:28px;height:4.4px;background:linear-gradient(90deg,#8f949c 0px 3px,#a7abb2 3px 7px,#a7abb2 7px 9px,#8f949c 9px 13px,#8f949c 13px 18px,#c3c6cb 18px 21px,#c3c6cb 21px 26px,#9ea2a9 26px 28px);filter:blur(0.8px);opacity:0.85"></div>
<div class="t" style="left:411.80px;top:48.27px;font-size:6.9px;color:#3c3f45">2025-09-03</div>
<div class="t" style="left:462.10px;top:48.27px;font-size:6.9px;color:#3c3f45">3</div>
<div class="a" style="left:504.40px;top:45.42px;width:22.2px;height:10.5px;border-radius:5.3px;background:#3a8cfb"></div>
<div class="t" style="left:509.30px;top:47.47px;font-size:6.2px;font-weight:bold;color:#fff">查看</div>
<div class="t" style="left:541.00px;top:48.27px;font-size:6.9px;color:#3c3f45">0.106</div>
<div class="t" style="left:581.50px;top:48.27px;font-size:6.9px;color:#3c3f45">0.05</div>
<div class="t" style="left:621.80px;top:48.27px;font-size:6.9px;color:#3c3f45">0,1,2,3,4,5,6</div>
<div class="t" style="left:672.60px;top:48.88px;font-size:6.5px;color:#3c3f45">鲁敦谋-</div>
<div class="a" style="left:696.50px;top:48.47px;width:40px;height:4.4px;background:linear-gradient(90deg,#8f949c 0px 5px,#a7abb2 5px 8px,#c3c6cb 8px 13px,#9ea2a9 13px 17px,#c3c6cb 17px 22px,#c3c6cb 22px 27px,#a7abb2 27px 29px,#a7abb2 29px 32px,#c3c6cb 32px 36px,#8f949c 36px 40px);filter:blur(0.8px);opacity:0.85"></div>
<div class="t" style="left:757.90px;top:48.88px;font-size:6.5px;color:#3c3f45">未推送</div>
<div class="a" style="left:803.60px;top:45.17px;width:41.6px;height:11px;border-radius:5.5px;background:#3a8cfb"></div>
<div class="t" style="left:803.60px;top:47.47px;font-size:6.2px;font-weight:bold;color:#fff;width:41.6px;text-align:center">日用水曲线</div>
<div class="a" style="left:856.30px;top:45.17px;width:35.3px;height:11px;border-radius:5.5px;background:#3a8cfb"></div>
<div class="t" style="left:856.30px;top:47.47px;font-size:6.2px;font-weight:bold;color:#fff;width:35.3px;text-align:center">历史漏损</div>
<div class="a" style="left:902.70px;top:45.17px;width:34.7px;height:11px;border-radius:5.5px;background:#3a8cfb"></div>
<div class="t" style="left:902.70px;top:47.47px;font-size:6.2px;font-weight:bold;color:#fff;width:34.7px;text-align:center">单表分析</div>
<div class="t" style="left:5.20px;top:68.52px;font-size:6.9px;color:#3c3f45">3</div>
<div class="a" style="left:36.50px;top:68.72px;width:31px;height:4.4px;background:linear-gradient(90deg,#9ea2a9 0px 2px,#c3c6cb 2px 7px,#a7abb2 7px 12px,#c3c6cb 12px 17px,#c3c6cb 17px 20px,#9ea2a9 20px 24px,#8f949c 24px 28px,#b3b6bc 28px 31px);filter:blur(0.8px);opacity:0.85"></div>
<div class="a" style="left:85.80px;top:68.72px;width:38px;height:4.4px;background:linear-gradient(90deg,#b3b6bc 0px 5px,#9ea2a9 5px 8px,#8f949c 8px 13px,#a7abb2 13px 16px,#8f949c 16px 20px,#a7abb2 20px 23px,#8f949c 23px 27px,#c3c6cb 27px 30px,#9ea2a9 30px 32px,#b3b6bc 32px 34px,#9ea2a9 34px 37px,#b3b6bc 37px 38px);filter:blur(0.8px);opacity:0.85"></div>
<div class="t" style="left:155.60px;top:69.12px;font-size:6.5px;color:#3c3f45">李相海</div>
<div class="t" style="left:206.50px;top:68.52px;font-size:6.9px;color:#3c3f45">50003</div>
<div class="t" style="left:272.90px;top:69.12px;font-size:6.5px;color:#3c3f45">新屋村两层，玻璃栏杆</div>
<div class="a" style="left:360.50px;top:68.72px;width:30px;height:4.4px;background:linear-gradient(90deg,#b3b6bc 0px 3px,#a7abb2 3px 5px,#b3b6bc 5px 7px,#9ea2a9 7px 10px,#a7abb2 10px 12px,#c3c6cb 12px 16px,#8f949c 16px 19px,#b3b6bc 19px 22px,#b3b6bc 22px 26px,#b3b6bc 26px 30px);filter:blur(0.8px);opacity:0.85"></div>
<div class="t" style="left:411.80px;top:68.52px;font-size:6.9px;color:#3c3f45">2025-09-03</div>
<div class="t" style="left:462.10px;top:68.52px;font-size:6.9px;color:#3c3f45">3</div>
<div class="a" style="left:504.40px;top:65.67px;width:22.2px;height:10.5px;border-radius:5.3px;background:#3a8cfb"></div>
<div class="t" style="left:509.30px;top:67.72px;font-size:6.2px;font-weight:bold;color:#fff">查看</div>
<div class="t" style="left:541.00px;top:68.52px;font-size:6.9px;color:#3c3f45">0.069</div>
<div class="t" style="left:581.50px;top:68.52px;font-size:6.9px;color:#3c3f45">0.05</div>
<div class="t" style="left:621.80px;top:68.52px;font-size:6.9px;color:#3c3f45">0,1,2,3,4,5,6</div>
<div class="t" style="left:672.60px;top:69.12px;font-size:6.5px;color:#3c3f45">鲁敦谋-</div>
<div class="a" style="left:696.50px;top:68.72px;width:40px;height:4.4px;background:linear-gradient(90deg,#b3b6bc 0px 2px,#c3c6cb 2px 5px,#9ea2a9 5px 10px,#a7abb2 10px 14px,#8f949c 14px 18px,#a7abb2 18px 23px,#9ea2a9 23px 26px,#9ea2a9 26px 28px,#c3c6cb 28px 30px,#a7abb2 30px 32px,#8f949c 32px 35px,#8f949c 35px 40px);filter:blur(0.8px);opacity:0.85"></div>
<div class="t" style="left:757.90px;top:69.12px;font-size:6.5px;color:#3c3f45">未推送</div>
<div class="a" style="left:803.60px;top:65.42px;width:41.6px;height:11px;border-radius:5.5px;background:#3a8cfb"></div>
<div class="t" style="left:803.60px;top:67.72px;font-size:6.2px;font-weight:bold;color:#fff;width:41.6px;text-align:center">日用水曲线</div>
<div class="a" style="left:856.30px;top:65.42px;width:35.3px;height:11px;border-radius:5.5px;background:#3a8cfb"></div>
<div class="t" style="left:856.30px;top:67.72px;font-size:6.2px;font-weight:bold;color:#fff;width:35.3px;text-align:center">历史漏损</div>
<div class="a" style="left:902.70px;top:65.42px;width:34.7px;height:11px;border-radius:5.5px;background:#3a8cfb"></div>
<div class="t" style="left:902.70px;top:67.72px;font-size:6.2px;font-weight:bold;color:#fff;width:34.7px;text-align:center">单表分析</div>
<div class="t" style="left:5.20px;top:88.77px;font-size:6.9px;color:#3c3f45">4</div>
<div class="a" style="left:36.50px;top:88.97px;width:30px;height:4.4px;background:linear-gradient(90deg,#b3b6bc 0px 5px,#b3b6bc 5px 8px,#9ea2a9 8px 13px,#8f949c 13px 18px,#b3b6bc 18px 23px,#9ea2a9 23px 25px,#a7abb2 25px 29px,#a7abb2 29px 30px);filter:blur(0.8px);opacity:0.85"></div>
<div class="a" style="left:85.80px;top:88.97px;width:38px;height:4.4px;background:linear-gradient(90deg,#a7abb2 0px 4px,#b3b6bc 4px 6px,#9ea2a9 6px 10px,#b3b6bc 10px 13px,#8f949c 13px 16px,#b3b6bc 16px 19px,#c3c6cb 19px 24px,#c3c6cb 24px 27px,#c3c6cb 27px 30px,#a7abb2 30px 35px,#9ea2a9 35px 38px);filter:blur(0.8px);opacity:0.85"></div>
<div class="t" style="left:155.60px;top:89.38px;font-size:6.5px;color:#3c3f45">许本全</div>
<div class="t" style="left:206.50px;top:88.77px;font-size:6.9px;color:#3c3f45">40014</div>
<div class="t" style="left:272.90px;top:89.38px;font-size:6.5px;color:#3c3f45">陶港镇团近许、睺喉组</div>
<div class="a" style="left:360.50px;top:88.97px;width:30px;height:4.4px;background:linear-gradient(90deg,#c3c6cb 0px 4px,#8f949c 4px 7px,#9ea2a9 7px 9px,#9ea2a9 9px 12px,#8f949c 12px 16px,#b3b6bc 16px 18px,#a7abb2 18px 22px,#b3b6bc 22px 24px,#9ea2a9 24px 26px,#8f949c 26px 30px);filter:blur(0.8px);opacity:0.85"></div>
<div class="t" style="left:411.80px;top:88.77px;font-size:6.9px;color:#3c3f45">2025-09-03</div>
<div class="t" style="left:462.10px;top:88.77px;font-size:6.9px;color:#3c3f45">3</div>
<div class="a" style="left:504.40px;top:85.92px;width:22.2px;height:10.5px;border-radius:5.3px;background:#3a8cfb"></div>
<div class="t" style="left:509.30px;top:87.97px;font-size:6.2px;font-weight:bold;color:#fff">查看</div>
<div class="t" style="left:541.00px;top:88.77px;font-size:6.9px;color:#3c3f45">0.077</div>
<div class="t" style="left:581.50px;top:88.77px;font-size:6.9px;color:#3c3f45">0.05</div>
<div class="t" style="left:621.80px;top:88.77px;font-size:6.9px;color:#3c3f45">0,1,2,3,4,5,6</div>
<div class="t" style="left:672.60px;top:89.38px;font-size:6.5px;color:#3c3f45">陈敬职-</div>
<div class="a" style="left:696.50px;top:88.97px;width:40px;height:4.4px;background:linear-gradient(90deg,#b3b6bc 0px 5px,#a7abb2 5px 7px,#9ea2a9 7px 9px,#b3b6bc 9px 12px,#a7abb2 12px 14px,#9ea2a9 14px 19px,#9ea2a9 19px 22px,#8f949c 22px 26px,#a7abb2 26px 30px,#b3b6bc 30px 33px,#8f949c 33px 36px,#9ea2a9 36px 39px,#c3c6cb 39px 40px);filter:blur(0.8px);opacity:0.85"></div>
<div class="t" style="left:757.90px;top:89.38px;font-size:6.5px;color:#3c3f45">未推送</div>
<div class="a" style="left:803.60px;top:85.67px;width:41.6px;height:11px;border-radius:5.5px;background:#3a8cfb"></div>
<div class="t" style="left:803.60px;top:87.97px;font-size:6.2px;font-weight:bold;color:#fff;width:41.6px;text-align:center">日用水曲线</div>
<div class="a" style="left:856.30px;top:85.67px;width:35.3px;height:11px;border-radius:5.5px;background:#3a8cfb"></div>
<div class="t" style="left:856.30px;top:87.97px;font-size:6.2px;font-weight:bold;color:#fff;width:35.3px;text-align:center">历史漏损</div>
<div class="a" style="left:902.70px;top:85.67px;width:34.7px;height:11px;border-radius:5.5px;background:#3a8cfb"></div>
<div class="t" style="left:902.70px;top:87.97px;font-size:6.2px;font-weight:bold;color:#fff;width:34.7px;text-align:center">单表分析</div>
<div class="t" style="left:5.20px;top:109.02px;font-size:6.9px;color:#3c3f45">5</div>
<div class="a" style="left:36.50px;top:109.22px;width:30px;height:4.4px;background:linear-gradient(90deg,#c3c6cb 0px 2px,#b3b6bc 2px 6px,#a7abb2 6px 11px,#b3b6bc 11px 15px,#c3c6cb 15px 17px,#b3b6bc 17px 21px,#c3c6cb 21px 23px,#c3c6cb 23px 28px,#c3c6cb 28px 30px);filter:blur(0.8px);opacity:0.85"></div>
<div class="a" style="left:85.80px;top:109.22px;width:38px;height:4.4px;background:linear-gradient(90deg,#b3b6bc 0px 3px,#c3c6cb 3px 6px,#8f949c 6px 10px,#b3b6bc 10px 12px,#8f949c 12px 14px,#9ea2a9 14px 16px,#a7abb2 16px 21px,#8f949c 21px 23px,#c3c6cb 23px 25px,#a7abb2 25px 29px,#9ea2a9 29px 34px,#9ea2a9 34px 38px);filter:blur(0.8px);opacity:0.85"></div>
<div class="t" style="left:155.60px;top:109.62px;font-size:6.5px;color:#3c3f45">许俊雨</div>
<div class="t" style="left:206.50px;top:109.02px;font-size:6.9px;color:#3c3f45">40014</div>
<div class="t" style="left:272.90px;top:109.62px;font-size:6.5px;color:#3c3f45">陶港镇团近许、睺喉组</div>
<div class="a" style="left:360.50px;top:109.22px;width:34px;height:4.4px;background:linear-gradient(90deg,#a7abb2 0px 3px,#9ea2a9 3px 6px,#c3c6cb 6px 8px,#a7abb2 8px 11px,#c3c6cb 11px 16px,#8f949c 16px 21px,#8f949c 21px 25px,#b3b6bc 25px 27px,#c3c6cb 27px 30px,#8f949c 30px 32px,#b3b6bc 32px 34px);filter:blur(0.8px);opacity:0.85"></div>
<div class="t" style="left:411.80px;top:109.02px;font-size:6.9px;color:#3c3f45">2025-09-03</div>
<div class="t" style="left:462.10px;top:109.02px;font-size:6.9px;color:#3c3f45">3</div>
<div class="a" style="left:504.40px;top:106.17px;width:22.2px;height:10.5px;border-radius:5.3px;background:#3a8cfb"></div>
<div class="t" style="left:509.30px;top:108.22px;font-size:6.2px;font-weight:bold;color:#fff">查看</div>
<div class="t" style="left:541.00px;top:109.02px;font-size:6.9px;color:#3c3f45">0.161</div>
<div class="t" style="left:581.50px;top:109.02px;font-size:6.9px;color:#3c3f45">0.05</div>
<div class="t" style="left:621.80px;top:109.02px;font-size:6.9px;color:#3c3f45">0,1,2,3,4,5,6</div>
<div class="t" style="left:672.60px;top:109.62px;font-size:6.5px;color:#3c3f45">陈敬职-</div>
<div class="a" style="left:696.50px;top:109.22px;width:40px;height:4.4px;background:linear-gradient(90deg,#b3b6bc 0px 3px,#a7abb2 3px 7px,#9ea2a9 7px 11px,#8f949c 11px 14px,#a7abb2 14px 19px,#c3c6cb 19px 24px,#9ea2a9 24px 29px,#a7abb2 29px 34px,#c3c6cb 34px 38px,#c3c6cb 38px 40px);filter:blur(0.8px);opacity:0.85"></div>
<div class="t" style="left:757.90px;top:109.62px;font-size:6.5px;color:#3c3f45">未推送</div>
<div class="a" style="left:803.60px;top:105.92px;width:41.6px;height:11px;border-radius:5.5px;background:#3a8cfb"></div>
<div class="t" style="left:803.60px;top:108.22px;font-size:6.2px;font-weight:bold;color:#fff;width:41.6px;text-align:center">日用水曲线</div>
<div class="a" style="left:856.30px;top:105.92px;width:35.3px;height:11px;border-radius:5.5px;background:#3a8cfb"></div>
<div class="t" style="left:856.30px;top:108.22px;font-size:6.2px;font-weight:bold;color:#fff;width:35.3px;text-align:center">历史漏损</div>
<div class="a" style="left:902.70px;top:105.92px;width:34.7px;height:11px;border-radius:5.5px;background:#3a8cfb"></div>
<div class="t" style="left:902.70px;top:108.22px;font-size:6.2px;font-weight:bold;color:#fff;width:34.7px;text-align:center">单表分析</div>
<div class="t" style="left:5.20px;top:129.28px;font-size:6.9px;color:#3c3f45">6</div>
<div class="a" style="left:36.50px;top:129.48px;width:30px;height:4.4px;background:linear-gradient(90deg,#9ea2a9 0px 3px,#b3b6bc 3px 6px,#c3c6cb 6px 9px,#c3c6cb 9px 13px,#b3b6bc 13px 16px,#c3c6cb 16px 18px,#b3b6bc 18px 22px,#c3c6cb 22px 24px,#b3b6bc 24px 26px,#a7abb2 26px 30px);filter:blur(0.8px);opacity:0.85"></div>
<div class="a" style="left:85.80px;top:129.48px;width:53px;height:4.4px;background:linear-gradient(90deg,#9ea2a9 0px 2px,#a7abb2 2px 7px,#a7abb2 7px 10px,#c3c6cb 10px 15px,#8f949c 15px 18px,#a7abb2 18px 21px,#8f949c 21px 24px,#b3b6bc 24px 27px,#b3b6bc 27px 32px,#b3b6bc 32px 35px,#9ea2a9 35px 39px,#8f949c 39px 43px,#c3c6cb 43px 46px,#8f949c 46px 49px,#9ea2a9 49px 51px,#b3b6bc 51px 53px);filter:blur(0.8px);opacity:0.85"></div>
<div class="t" style="left:155.60px;top:129.88px;font-size:6.5px;color:#3c3f45">张绪根</div>
<div class="t" style="left:206.50px;top:129.28px;font-size:6.9px;color:#3c3f45">20002</div>
<div class="t" style="left:272.90px;top:129.88px;font-size:6.5px;color:#3c3f45">军垦金泉</div>
<div class="a" style="left:360.50px;top:129.48px;width:24px;height:4.4px;background:linear-gradient(90deg,#a7abb2 0px 5px,#9ea2a9 5px 7px,#9ea2a9 7px 12px,#c3c6cb 12px 14px,#a7abb2 14px 17px,#8f949c 17px 21px,#8f949c 21px 24px);filter:blur(0.8px);opacity:0.85"></div>
<div class="t" style="left:411.80px;top:129.28px;font-size:6.9px;color:#3c3f45">2025-09-03</div>
<div class="t" style="left:462.10px;top:129.28px;font-size:6.9px;color:#3c3f45">3</div>
<div class="a" style="left:504.40px;top:126.43px;width:22.2px;height:10.5px;border-radius:5.3px;background:#3a8cfb"></div>
<div class="t" style="left:509.30px;top:128.48px;font-size:6.2px;font-weight:bold;color:#fff">查看</div>
<div class="t" style="left:541.00px;top:129.28px;font-size:6.9px;color:#3c3f45">0.106</div>
<div class="t" style="left:581.50px;top:129.28px;font-size:6.9px;color:#3c3f45">0.05</div>
<div class="t" style="left:621.80px;top:129.28px;font-size:6.9px;color:#3c3f45">0,1,2,3,4,5,6</div>
<div class="t" style="left:672.60px;top:129.88px;font-size:6.5px;color:#3c3f45">陈建军-</div>
<div class="a" style="left:696.50px;top:129.48px;width:40px;height:4.4px;background:linear-gradient(90deg,#a7abb2 0px 3px,#a7abb2 3px 7px,#8f949c 7px 10px,#9ea2a9 10px 12px,#a7abb2 12px 15px,#8f949c 15px 19px,#9ea2a9 19px 24px,#8f949c 24px 27px,#9ea2a9 27px 29px,#8f949c 29px 34px,#c3c6cb 34px 36px,#c3c6cb 36px 39px,#c3c6cb 39px 40px);filter:blur(0.8px);opacity:0.85"></div>
<div class="t" style="left:757.90px;top:129.88px;font-size:6.5px;color:#3c3f45">未推送</div>
<div class="a" style="left:803.60px;top:126.18px;width:41.6px;height:11px;border-radius:5.5px;background:#3a8cfb"></div>
<div class="t" style="left:803.60px;top:128.48px;font-size:6.2px;font-weight:bold;color:#fff;width:41.6px;text-align:center">日用水曲线</div>
<div class="a" style="left:856.30px;top:126.18px;width:35.3px;height:11px;border-radius:5.5px;background:#3a8cfb"></div>
<div class="t" style="left:856.30px;top:128.48px;font-size:6.2px;font-weight:bold;color:#fff;width:35.3px;text-align:center">历史漏损</div>
<div class="a" style="left:902.70px;top:126.18px;width:34.7px;height:11px;border-radius:5.5px;background:#3a8cfb"></div>
<div class="t" style="left:902.70px;top:128.48px;font-size:6.2px;font-weight:bold;color:#fff;width:34.7px;text-align:center">单表分析</div>
<div class="t" style="left:5.20px;top:149.53px;font-size:6.9px;color:#3c3f45">7</div>
<div class="a" style="left:36.50px;top:149.73px;width:30px;height:4.4px;background:linear-gradient(90deg,#9ea2a9 0px 4px,#8f949c 4px 6px,#b3b6bc 6px 10px,#a7abb2 10px 15px,#9ea2a9 15px 20px,#8f949c 20px 25px,#8f949c 25px 27px,#9ea2a9 27px 30px);filter:blur(0.8px);opacity:0.85"></div>
<div class="a" style="left:85.80px;top:149.73px;width:61px;height:4.4px;background:linear-gradient(90deg,#b3b6bc 0px 5px,#b3b6bc 5px 10px,#a7abb2 10px 14px,#9ea2a9 14px 18px,#c3c6cb 18px 23px,#a7abb2 23px 25px,#a7abb2 25px 28px,#b3b6bc 28px 32px,#b3b6bc 32px 34px,#b3b6bc 34px 39px,#8f949c 39px 41px,#a7abb2 41px 44px,#a7abb2 44px 47px,#8f949c 47px 52px,#b3b6bc 52px 57px,#c3c6cb 57px 61px);filter:blur(0.8px);opacity:0.85"></div>
<div class="t" style="left:155.60px;top:150.12px;font-size:6.5px;color:#3c3f45">明廷武</div>
<div class="t" style="left:206.50px;top:149.53px;font-size:6.9px;color:#3c3f45">30005</div>
<div class="t" style="left:272.90px;top:150.12px;font-size:6.5px;color:#3c3f45">荆头山北煦湖良种场</div>
<div class="a" style="left:360.50px;top:149.73px;width:27px;height:4.4px;background:linear-gradient(90deg,#9ea2a9 0px 2px,#b3b6bc 2px 5px,#9ea2a9 5px 9px,#b3b6bc 9px 13px,#9ea2a9 13px 17px,#9ea2a9 17px 22px,#9ea2a9 22px 24px,#8f949c 24px 27px);filter:blur(0.8px);opacity:0.85"></div>
<div class="t" style="left:411.80px;top:149.53px;font-size:6.9px;color:#3c3f45">2025-09-03</div>
<div class="t" style="left:462.10px;top:149.53px;font-size:6.9px;color:#3c3f45">3</div>
<div class="a" style="left:504.40px;top:146.68px;width:22.2px;height:10.5px;border-radius:5.3px;background:#3a8cfb"></div>
<div class="t" style="left:509.30px;top:148.73px;font-size:6.2px;font-weight:bold;color:#fff">查看</div>
<div class="t" style="left:541.00px;top:149.53px;font-size:6.9px;color:#3c3f45">0.057</div>
<div class="t" style="left:581.50px;top:149.53px;font-size:6.9px;color:#3c3f45">0.05</div>
<div class="t" style="left:621.80px;top:149.53px;font-size:6.9px;color:#3c3f45">0,1,2,3,4,5,6</div>
<div class="t" style="left:672.60px;top:150.12px;font-size:6.5px;color:#3c3f45">刘洋-15</div>
<div class="a" style="left:696.50px;top:149.73px;width:34px;height:4.4px;background:linear-gradient(90deg,#c3c6cb 0px 5px,#a7abb2 5px 9px,#9ea2a9 9px 12px,#9ea2a9 12px 17px,#8f949c 17px 19px,#c3c6cb 19px 24px,#a7abb2 24px 26px,#a7abb2 26px 28px,#8f949c 28px 33px,#c3c6cb 33px 34px);filter:blur(0.8px);opacity:0.85"></div>
<div class="t" style="left:757.90px;top:150.12px;font-size:6.5px;color:#3c3f45">未推送</div>
<div class="a" style="left:803.60px;top:146.43px;width:41.6px;height:11px;border-radius:5.5px;background:#3a8cfb"></div>
<div class="t" style="left:803.60px;top:148.73px;font-size:6.2px;font-weight:bold;color:#fff;width:41.6px;text-align:center">日用水曲线</div>
<div class="a" style="left:856.30px;top:146.43px;width:35.3px;height:11px;border-radius:5.5px;background:#3a8cfb"></div>
<div class="t" style="left:856.30px;top:148.73px;font-size:6.2px;font-weight:bold;color:#fff;width:35.3px;text-align:center">历史漏损</div>
<div class="a" style="left:902.70px;top:146.43px;width:34.7px;height:11px;border-radius:5.5px;background:#3a8cfb"></div>
<div class="t" style="left:902.70px;top:148.73px;font-size:6.2px;font-weight:bold;color:#fff;width:34.7px;text-align:center">单表分析</div>
<div class="t" style="left:5.20px;top:169.78px;font-size:6.9px;color:#3c3f45">8</div>
<div class="a" style="left:36.50px;top:169.98px;width:30px;height:4.4px;background:linear-gradient(90deg,#a7abb2 0px 2px,#9ea2a9 2px 6px,#9ea2a9 6px 10px,#8f949c 10px 12px,#a7abb2 12px 14px,#c3c6cb 14px 18px,#b3b6bc 18px 22px,#8f949c 22px 24px,#a7abb2 24px 26px,#9ea2a9 26px 30px);filter:blur(0.8px);opacity:0.85"></div>
<div class="a" style="left:85.80px;top:169.98px;width:53px;height:4.4px;background:linear-gradient(90deg,#9ea2a9 0px 4px,#b3b6bc 4px 9px,#9ea2a9 9px 13px,#9ea2a9 13px 18px,#a7abb2 18px 22px,#c3c6cb 22px 26px,#a7abb2 26px 31px,#c3c6cb 31px 35px,#8f949c 35px 37px,#9ea2a9 37px 42px,#a7abb2 42px 44px,#8f949c 44px 46px,#a7abb2 46px 48px,#8f949c 48px 50px,#a7abb2 50px 53px);filter:blur(0.8px);opacity:0.85"></div>
<div class="t" style="left:155.60px;top:170.38px;font-size:6.5px;color:#3c3f45">吴远海</div>
<div class="t" style="left:206.50px;top:169.78px;font-size:6.9px;color:#3c3f45">20003</div>
<div class="t" style="left:272.90px;top:170.38px;font-size:6.5px;color:#3c3f45">军垦吴家湾</div>
<div class="a" style="left:360.50px;top:169.98px;width:26px;height:4.4px;background:linear-gradient(90deg,#8f949c 0px 2px,#8f949c 2px 6px,#c3c6cb 6px 8px,#8f949c 8px 10px,#c3c6cb 10px 12px,#8f949c 12px 17px,#b3b6bc 17px 21px,#8f949c 21px 23px,#b3b6bc 23px 25px,#a7abb2 25px 26px);filter:blur(0.8px);opacity:0.85"></div>
<div class="t" style="left:411.80px;top:169.78px;font-size:6.9px;color:#3c3f45">2025-09-03</div>
<div class="t" style="left:462.10px;top:169.78px;font-size:6.9px;color:#3c3f45">3</div>
<div class="a" style="left:504.40px;top:166.93px;width:22.2px;height:10.5px;border-radius:5.3px;background:#3a8cfb"></div>
<div class="t" style="left:509.30px;top:168.98px;font-size:6.2px;font-weight:bold;color:#fff">查看</div>
<div class="t" style="left:541.00px;top:169.78px;font-size:6.9px;color:#3c3f45">0.309</div>
<div class="t" style="left:581.50px;top:169.78px;font-size:6.9px;color:#3c3f45">0.05</div>
<div class="t" style="left:621.80px;top:169.78px;font-size:6.9px;color:#3c3f45">0,1,2,3,4,5,6</div>
<div class="t" style="left:672.60px;top:170.38px;font-size:6.5px;color:#3c3f45">陈建军-</div>
<div class="a" style="left:696.50px;top:169.98px;width:40px;height:4.4px;background:linear-gradient(90deg,#a7abb2 0px 5px,#b3b6bc 5px 10px,#a7abb2 10px 15px,#8f949c 15px 17px,#9ea2a9 17px 20px,#a7abb2 20px 24px,#9ea2a9 24px 28px,#a7abb2 28px 31px,#9ea2a9 31px 33px,#b3b6bc 33px 35px,#c3c6cb 35px 39px,#b3b6bc 39px 40px);filter:blur(0.8px);opacity:0.85"></div>
<div class="t" style="left:757.90px;top:170.38px;font-size:6.5px;color:#3c3f45">未推送</div>
<div class="a" style="left:803.60px;top:166.68px;width:41.6px;height:11px;border-radius:5.5px;background:#3a8cfb"></div>
<div class="t" style="left:803.60px;top:168.98px;font-size:6.2px;font-weight:bold;color:#fff;width:41.6px;text-align:center">日用水曲线</div>
<div class="a" style="left:856.30px;top:166.68px;width:35.3px;height:11px;border-radius:5.5px;background:#3a8cfb"></div>
<div class="t" style="left:856.30px;top:168.98px;font-size:6.2px;font-weight:bold;color:#fff;width:35.3px;text-align:center">历史漏损</div>
<div class="a" style="left:902.70px;top:166.68px;width:34.7px;height:11px;border-radius:5.5px;background:#3a8cfb"></div>
<div class="t" style="left:902.70px;top:168.98px;font-size:6.2px;font-weight:bold;color:#fff;width:34.7px;text-align:center">单表分析</div>
<div class="t" style="left:5.20px;top:190.03px;font-size:6.9px;color:#3c3f45">9</div>
<div class="a" style="left:36.50px;top:190.23px;width:30px;height:4.4px;background:linear-gradient(90deg,#8f949c 0px 4px,#c3c6cb 4px 7px,#9ea2a9 7px 9px,#a7abb2 9px 12px,#8f949c 12px 16px,#b3b6bc 16px 19px,#a7abb2 19px 24px,#9ea2a9 24px 29px,#b3b6bc 29px 30px);filter:blur(0.8px);opacity:0.85"></div>
<div class="a" style="left:85.80px;top:190.23px;width:53px;height:4.4px;background:linear-gradient(90deg,#9ea2a9 0px 2px,#c3c6cb 2px 7px,#a7abb2 7px 12px,#9ea2a9 12px 15px,#8f949c 15px 19px,#a7abb2 19px 23px,#c3c6cb 23px 26px,#c3c6cb 26px 30px,#c3c6cb 30px 35px,#8f949c 35px 38px,#b3b6bc 38px 41px,#a7abb2 41px 44px,#8f949c 44px 48px,#8f949c 48px 50px,#8f949c 50px 53px);filter:blur(0.8px);opacity:0.85"></div>
<div class="t" style="left:155.60px;top:190.62px;font-size:6.5px;color:#3c3f45">吴学录</div>
<div class="t" style="left:206.50px;top:190.03px;font-size:6.9px;color:#3c3f45">20003</div>
<div class="t" style="left:272.90px;top:190.62px;font-size:6.5px;color:#3c3f45">军垦吴家湾</div>
<div class="a" style="left:360.50px;top:190.23px;width:24px;height:4.4px;background:linear-gradient(90deg,#a7abb2 0px 2px,#b3b6bc 2px 7px,#9ea2a9 7px 10px,#9ea2a9 10px 13px,#a7abb2 13px 18px,#9ea2a9 18px 23px,#a7abb2 23px 24px);filter:blur(0.8px);opacity:0.85"></div>
<div class="t" style="left:411.80px;top:190.03px;font-size:6.9px;color:#3c3f45">2025-09-03</div>
<div class="t" style="left:462.10px;top:190.03px;font-size:6.9px;color:#3c3f45">3</div>
<div class="a" style="left:504.40px;top:187.18px;width:22.2px;height:10.5px;border-radius:5.3px;background:#3a8cfb"></div>
<div class="t" style="left:509.30px;top:189.23px;font-size:6.2px;font-weight:bold;color:#fff">查看</div>
<div class="t" style="left:541.00px;top:190.03px;font-size:6.9px;color:#3c3f45">0.104</div>
<div class="t" style="left:581.50px;top:190.03px;font-size:6.9px;color:#3c3f45">0.05</div>
<div class="t" style="left:621.80px;top:190.03px;font-size:6.9px;color:#3c3f45">0,1,2,3,4,5,6</div>
<div class="t" style="left:672.60px;top:190.62px;font-size:6.5px;color:#3c3f45">陈建军-</div>
<div class="a" style="left:696.50px;top:190.23px;width:40px;height:4.4px;background:linear-gradient(90deg,#8f949c 0px 5px,#c3c6cb 5px 8px,#b3b6bc 8px 10px,#a7abb2 10px 15px,#c3c6cb 15px 19px,#b3b6bc 19px 21px,#a7abb2 21px 24px,#c3c6cb 24px 28px,#8f949c 28px 32px,#b3b6bc 32px 37px,#a7abb2 37px 39px,#9ea2a9 39px 40px);filter:blur(0.8px);opacity:0.85"></div>
<div class="t" style="left:757.90px;top:190.62px;font-size:6.5px;color:#3c3f45">未推送</div>
<div class="a" style="left:803.60px;top:186.93px;width:41.6px;height:11px;border-radius:5.5px;background:#3a8cfb"></div>
<div class="t" style="left:803.60px;top:189.23px;font-size:6.2px;font-weight:bold;color:#fff;width:41.6px;text-align:center">日用水曲线</div>
<div class="a" style="left:856.30px;top:186.93px;width:35.3px;height:11px;border-radius:5.5px;background:#3a8cfb"></div>
<div class="t" style="left:856.30px;top:189.23px;font-size:6.2px;font-weight:bold;color:#fff;width:35.3px;text-align:center">历史漏损</div>
<div class="a" style="left:902.70px;top:186.93px;width:34.7px;height:11px;border-radius:5.5px;background:#3a8cfb"></div>
<div class="t" style="left:902.70px;top:189.23px;font-size:6.2px;font-weight:bold;color:#fff;width:34.7px;text-align:center">单表分析</div>
<div class="a" style="left:956.2px;top:0;width:3.8px;height:20.6px;background:#ebebed"></div>
<div class="a" style="left:956.2px;top:20.6px;width:3.6px;height:73.5px;border-radius:1px;background:#c1c3c7"></div>
<div class="a" style="left:959.2px;top:94px;width:0.6px;height:101px;background:#eceef2"></div>
</div>
<div class="a" style="left:111.8px;top:534.8px;width:951.8px;height:3.1px;background:#c8c9cc;border-radius:1.5px"></div>
<div class="t" style="left:854.4px;top:544.6px;font-size:6.6px;color:#606266">共 306 条记录</div>
<svg class="a" style="left:903px;top:544px" width="8" height="7" viewBox="0 0 8 7"><path d="M3.6 1L1.2 3.5L3.6 6M6.8 1L4.4 3.5L6.8 6" fill="none" stroke="#c0c4cc" stroke-width="0.7"/></svg>
<svg class="a" style="left:921.5px;top:544px" width="5" height="7" viewBox="0 0 5 7"><path d="M3.8 1L1.4 3.5L3.8 6" fill="none" stroke="#c0c4cc" stroke-width="0.7"/></svg>
<div class="a" style="left:935.3px;top:540.2px;width:28px;height:14.4px;border:0.7px solid #e6e8ee;border-radius:2px;background:#fff"></div>
<div class="t" style="left:935.8px;top:543.6px;width:28px;text-align:center;font-size:7.6px;color:#303133">1</div>
<div class="t" style="left:969.6px;top:544.3px;font-size:7px;color:#606266">/ 16</div>
<svg class="a" style="left:991.5px;top:544px" width="5" height="7" viewBox="0 0 5 7"><path d="M1.2 1L3.6 3.5L1.2 6" fill="none" stroke="#303133" stroke-width="0.7"/></svg>
<svg class="a" style="left:1007.5px;top:544px" width="8" height="7" viewBox="0 0 8 7"><path d="M1.2 1L3.6 3.5L1.2 6M4.4 1L6.8 3.5L4.4 6" fill="none" stroke="#606266" stroke-width="0.7"/></svg>
<div class="a" style="left:1023.5px;top:540.2px;width:46px;height:14.4px;border:0.7px solid #e6e8ee;border-radius:2px;background:#fff"></div>
<div class="t" style="left:1030.3px;top:545px;font-size:6.9px;color:#3c3f45">20条/页</div>
<div class="a" style="left:1060.5px;top:541px;width:0.6px;height:13px;background:#eceef2"></div>
<svg class="a" style="left:1061px;top:546px" width="5" height="4" viewBox="0 0 5 4"><path d="M0.5 0.8H4.5L2.5 3.2Z" fill="#c0c4cc"/></svg>
<div class="a" style="left:112px;top:557.5px;width:960px;height:1px;background:#eef0f3"></div><!--/TABLE-->
</div>
</body></html>
